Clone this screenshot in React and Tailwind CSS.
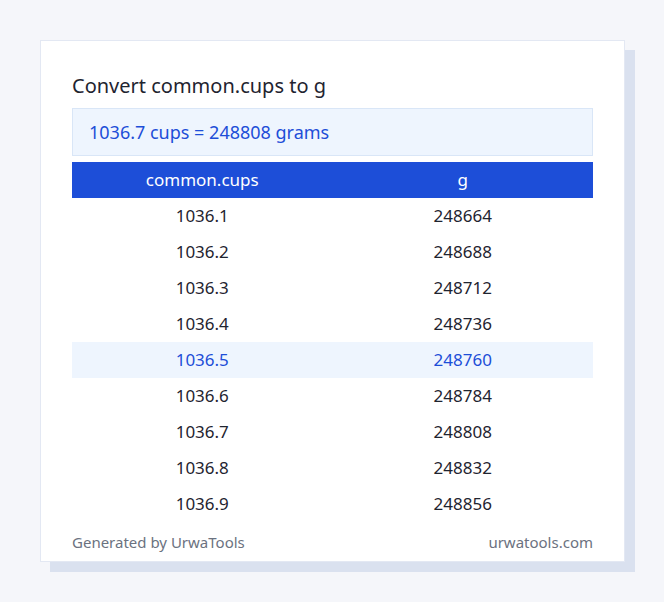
export default function App() {
  const rows = [
    ["1036.1", "248664"], ["1036.2", "248688"], ["1036.3", "248712"], ["1036.4", "248736"],
    ["1036.5", "248760"], ["1036.6", "248784"], ["1036.7", "248808"], ["1036.8", "248832"], ["1036.9", "248856"],
  ];
  return (
    <div className="w-[664px] h-[602px] bg-[#f5f6fa] pt-[40px] pl-[40px]" style={{ fontFamily: '"Noto Sans", sans-serif' }}>
      <div className="w-[585px] h-[522px] bg-white border border-[#e3e8f3] shadow-[10px_10px_0_#dae1ef] px-[31px] pt-[31px]">
        <div className="text-[20px] leading-[28px] text-[#1f2430] mb-2">Convert common.cups to g</div>
        <div className="h-[48px] bg-[#eef5fe] border border-[#d9e6f7] flex items-center px-4 text-[18px] text-[#1d4ed8]">1036.7 cups = 248808 grams</div>
        <div className="mt-[6px] h-[36px] bg-[#1d4ed8] grid grid-cols-2 items-center text-center text-white text-[17px]">
          <div>common.cups</div><div>g</div>
        </div>
        {rows.map(([a, b], i) => (
          <div key={a} className={`h-[36px] grid grid-cols-2 items-center text-center text-[17px] ${i === 4 ? "bg-[#eef5fe] text-[#1d4ed8]" : "text-[#1f2430]"}`}>
            <div>{a}</div><div>{b}</div>
          </div>
        ))}
        <div className="flex justify-between items-center h-[40px] text-[15px] text-[#6b7280]">
          <span>Generated by UrwaTools</span><span>urwatools.com</span>
        </div>
      </div>
    </div>
  );
}
